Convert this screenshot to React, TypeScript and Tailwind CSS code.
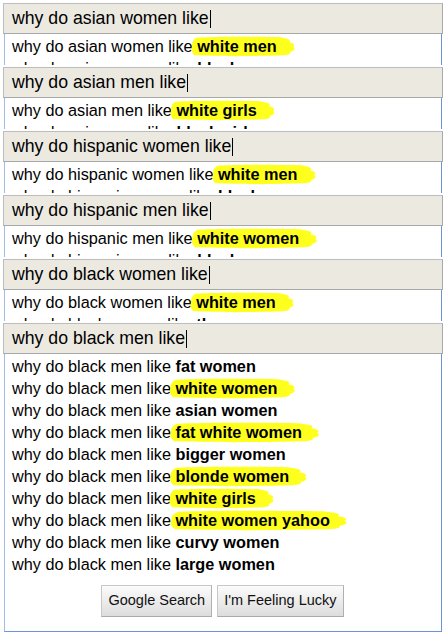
import React from "react";

function Mark({ children }: { children: React.ReactNode }) {
  return (
    <span className="relative inline-block font-bold">
      <span className="absolute -left-[7px] top-[0px] h-[22px] w-[calc(100%+26px)]">
        <svg className="block h-full w-full" viewBox="0 0 100 20" preserveAspectRatio="none">
          <path
            d="M6 2.5 C25 1 60 1.5 86 2 L90 3 C94 3.5 96 5 94 6.5 C98 7 100 9 98 11 C100 12.5 99 14.5 95 15.5 C96 17 93 18 88 18.5 C60 19.5 25 19.5 4 18.5 C1.5 16 1 13 2 10 C1.5 7 3 4 6 2.5 Z"
            fill="#ffff1e"
          />
        </svg>
      </span>
      <span className="relative">{children}</span>
    </span>
  );
}

type Row = { tail: string; hl: boolean };

function Line({ prefix, row }: { prefix: string; row: Row }) {
  return (
    <div className="h-[22px] whitespace-nowrap leading-[22px]">
      <span>{prefix} </span>
      {row.hl ? <Mark>{row.tail}</Mark> : <span className="font-bold">{row.tail}</span>}
    </div>
  );
}

function Input({ q }: { q: string }) {
  return (
    <div className="flex h-[31px] items-center border border-[#bdbdbd] border-b-[#a8a8a8] border-r-[#a8a8a8] bg-[#ece9e0] pl-[8px] text-[17.7px] text-black">
      <span className="whitespace-nowrap">{q}</span>
      <span className="ml-[1px] h-[18px] w-px bg-black" />
    </div>
  );
}

const small: { q: string; rows: Row[] }[] = [
  { q: "why do asian women like", rows: [{ tail: "white men", hl: true }, { tail: "black men", hl: false }] },
  { q: "why do asian men like", rows: [{ tail: "white girls", hl: true }, { tail: "black girls", hl: false }] },
  { q: "why do hispanic women like", rows: [{ tail: "white men", hl: true }, { tail: "black men", hl: false }] },
  { q: "why do hispanic men like", rows: [{ tail: "white women", hl: true }, { tail: "black women", hl: false }] },
  { q: "why do black women like", rows: [{ tail: "white men", hl: true }, { tail: "thugs", hl: false }] },
];

const big: Row[] = [
  { tail: "fat women", hl: false },
  { tail: "white women", hl: true },
  { tail: "asian women", hl: false },
  { tail: "fat white women", hl: true },
  { tail: "bigger women", hl: false },
  { tail: "blonde women", hl: true },
  { tail: "white girls", hl: true },
  { tail: "white women yahoo", hl: true },
  { tail: "curvy women", hl: false },
  { tail: "large women", hl: false },
];

export default function App() {
  return (
    <div className="h-[636px] w-[448px] overflow-hidden bg-white font-['Liberation_Sans',Arial,sans-serif] text-black">
      <div className="w-[446px] px-[3px] pt-[3px]">
        {small.map((p) => (
          <div key={p.q} className="mb-[2px]">
            <Input q={p.q} />
            <div className="mx-px h-[31px] overflow-hidden border-l border-r border-l-[#a3bbe8] border-r-[#6c93dc] bg-white pl-[7px] pt-px text-[16.25px]">
              {p.rows.map((r) => (
                <Line key={r.tail} prefix={p.q} row={r} />
              ))}
            </div>
          </div>
        ))}
        <div>
          <Input q="why do black men like" />
          <div className="mx-px border-b border-l border-r border-b-[#6c93dc] border-l-[#a3bbe8] border-r-[#6c93dc] bg-white pb-[14px] pl-[7px] pt-px text-[16.25px]">
            {big.map((r) => (
              <Line key={r.tail} prefix="why do black men like" row={r} />
            ))}
            <div className="mt-[10px] flex justify-center gap-[5px] pr-[8px]">
              <button className="h-[32px] border border-[#c8c8c8] border-b-[#aaaaaa] border-r-[#b0b0b0] bg-linear-to-b from-[#fbfbfb] to-[#dddddd] px-[6px] text-[14.5px] text-[#111]">
                Google Search
              </button>
              <button className="h-[32px] border border-[#c8c8c8] border-b-[#aaaaaa] border-r-[#b0b0b0] bg-linear-to-b from-[#fbfbfb] to-[#dddddd] px-[6px] text-[14.5px] text-[#111]">
                I'm Feeling Lucky
              </button>
            </div>
          </div>
        </div>
      </div>
    </div>
  );
}
